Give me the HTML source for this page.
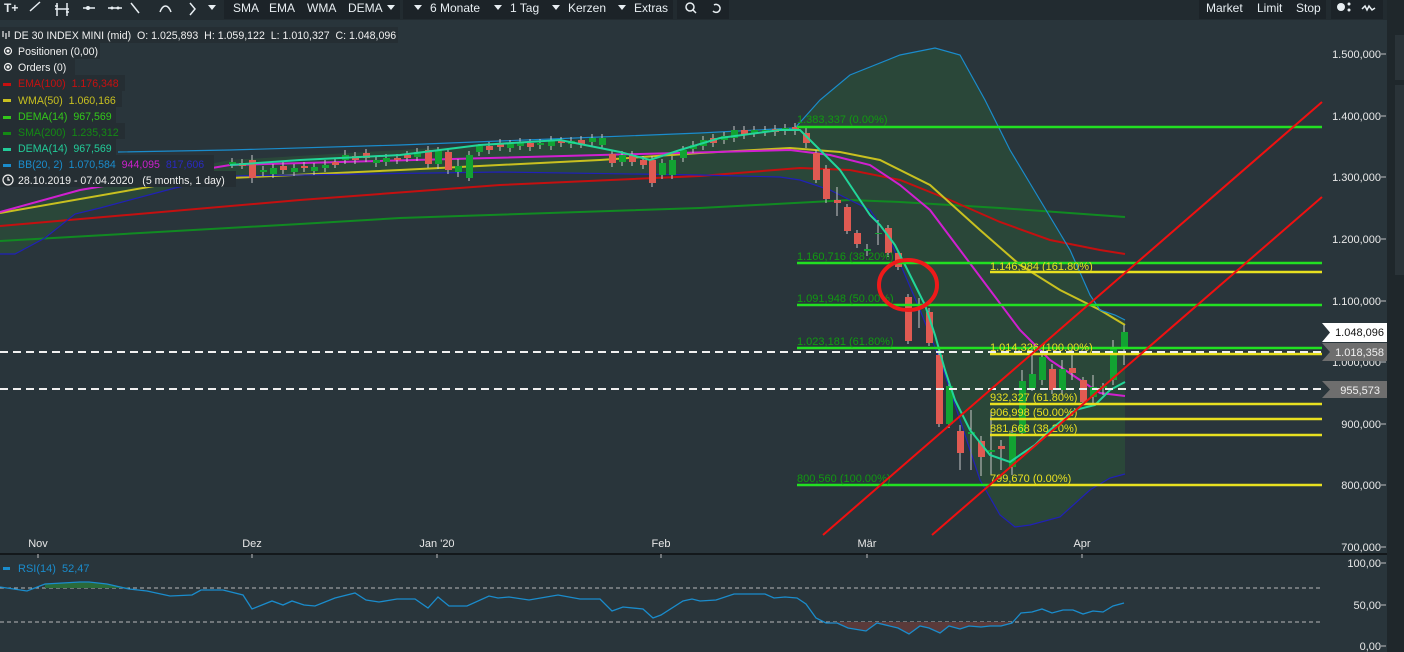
<!DOCTYPE html>
<html><head><meta charset="utf-8"><style>
html,body{margin:0;padding:0;background:#29353b;width:1404px;height:652px;overflow:hidden;font-family:"Liberation Sans",sans-serif;}
svg{position:absolute;left:0;top:0}
.pre{white-space:pre}
</style></head><body>
<svg width="1404" height="652" viewBox="0 0 1404 652" font-family="Liberation Sans, sans-serif" font-size="11">
<rect width="1404" height="652" fill="#29353b"/>
<!-- toolbar -->
<rect x="0" y="0" width="1404" height="20" fill="#222b30"/>
<rect x="224" y="0" width="176" height="19" fill="#1c2328"/>
<rect x="403" y="0" width="270" height="19" fill="#1c2328"/>
<rect x="677" y="0" width="52" height="19" fill="#1c2328"/>
<rect x="1199" y="0" width="127" height="19" fill="#1c2328"/>
<rect x="1331" y="0" width="52" height="19" fill="#1c2328"/>
<rect x="1387" y="0" width="17" height="652" fill="#1f272b"/>
<rect x="1395" y="35" width="9" height="45" fill="#2a3338"/>
<rect x="1395" y="85" width="9" height="190" fill="#2a3338"/>
<g fill="#e8eef2" font-size="12">
<text x="4" y="12" font-weight="bold">T+</text>
<text x="233" y="12">SMA</text><text x="269" y="12">EMA</text><text x="307" y="12">WMA</text><text x="348" y="12">DEMA</text>
<text x="430" y="12">6 Monate</text><text x="510" y="12">1 Tag</text><text x="568" y="12">Kerzen</text><text x="634" y="12">Extras</text>
<text x="1206" y="12">Market</text><text x="1257" y="12">Limit</text><text x="1296" y="12">Stop</text>
</g>
<g stroke="#e8eef2" stroke-width="1.5" fill="none">
<path d="M30 11 L40 2"/><path d="M57 3v13M67 3v13M55 9h14M55 6h3M66 12h3"/><path d="M83 8h12"/><path d="M108 8h14"/>
<path d="M131 3l8 10"/><path d="M160 12c3-8 8-8 11 0"/><path d="M190 3l5 6-5 6"/>
<circle cx="690" cy="7" r="4"/><path d="M693 10l3 3"/><path d="M714 5a4 4 0 1 1-1 6"/>
<path d="M1362 9l3-3 2 4 2-4 3 4 3-2"/>
</g>
<g fill="#e8eef2"><path d="M208 5h8l-4 5z"/><path d="M387 5h8l-4 5z"/><path d="M414 5h8l-4 5z"/><path d="M494 5h8l-4 5z"/><path d="M552 5h8l-4 5z"/><path d="M618 5h8l-4 5z"/><circle cx="1341" cy="7" r="4"/><circle cx="1349" cy="4" r="1.5"/><circle cx="1349" cy="10" r="1.5"/><circle cx="88" cy="8" r="2"/><circle cx="112" cy="8" r="1.5"/><circle cx="118" cy="8" r="1.5"/></g>

<!-- BB fill -->
<path d="M0 212 L80 190 L230 160 L400 150 L600 138 L700 133 L795 128 L820 100 L850 75 L900 55 L935 48 L960 55 L985 100 L1010 150 L1040 200 L1070 250 L1090 295 L1100 310 L1115 315 L1125 320 L1125 474 L1110 478 L1090 490 L1060 517 L1030 525 L1015 527 L1000 515 L980 480 L960 420 L940 360 L920 310 L905 275 L890 240 L870 210 L830 190 L800 180 L780 177 L700 175 L500 172 L300 175 L230 176 L175 188 L100 208 L75 214 L45 238 L15 254 L0 254Z" fill="#2a4a3a" opacity="0.85"/>
<polyline fill="none" stroke="#118a22" stroke-width="2" points="0,241 300,224 400,218 700,208 850,200 900,202 1000,208 1125,217"/>
<polyline fill="none" stroke="#c41010" stroke-width="2" points="0,226 300,200 500,185 700,176 800,168 850,170 900,180 950,200 1000,222 1050,240 1100,250 1125,254"/>
<polyline fill="none" stroke="#c8c020" stroke-width="2" points="0,213 160,185 230,178 400,170 600,160 700,153 790,148 840,152 880,160 930,185 980,230 1020,265 1060,290 1100,310 1125,325"/>
<polyline fill="none" stroke="#d020d0" stroke-width="2" points="0,212 80,190 230,165 600,155 790,150 830,155 870,165 900,185 930,210 960,250 990,290 1020,330 1050,360 1080,380 1100,393 1125,396"/>
<polyline fill="none" stroke="#1a8ccc" stroke-width="1.2" points="118,152 230,150 400,145 600,137 700,133 795,128 820,100 850,75 900,55 935,48 960,55 985,100 1010,150 1040,200 1070,250 1090,295 1100,310 1115,315 1125,320"/>
<polyline fill="none" stroke="#2020b8" stroke-width="1.2" points="0,254 15,254 45,238 75,214 100,208 175,188 230,176 300,175 500,172 700,175 780,177 800,180 830,190 870,210 890,240 905,275 920,310 940,360 960,420 980,480 1000,515 1015,527 1030,525 1060,517 1090,490 1110,478 1125,474"/>

<!-- candles -->
<g stroke="#c8c8c8" stroke-width="1">
<path d="M232 158v10M242 159v10M252 155v28M263 166v10M273 164v14M283 162v12M294 164v12M304 162v10M314 163v12M325 160v12M335 158v10M345 150v14M355 152v12M366 149v13M376 156v11M386 154v12M397 154v10M407 151v11M417 148v13M428 146v22M438 147v22M448 148v26M458 159v18M469 151v30M479 144v12M489 142v12M500 139v12M510 140v12M520 138v12M530 139v12M540 139v10M551 136v14M561 137v10M571 137v11M581 136v12M592 134v12M602 134v15M612 150v17M622 151v15M632 151v15M643 156v13M652 156v31M662 159v20M672 156v23M683 146v16M693 141v12M703 136v14M713 134v13M724 132v12M734 126v16M744 126v13M754 126v11M765 126v10M775 125v11M785 124v11M795 123v12M806 128v20M816 150v33M826 165v38M837 187v29M847 204v30M857 230v18M867 244v12M878 220v25M888 225v32M898 250v20M908 294v50M919 298v30M929 308v38M939 352v75M949 383v45M960 425v45M971 410v60M981 436v40M991 410v65M1001 440v30M1012 430v45M1022 370v65M1032 346v45M1042 350v35M1052 364v30M1062 360v35M1072 350v30M1083 377v28M1093 375v30M1103 383v12M1113 340v45M1124 325v40"/>
</g>
<g fill="#e05a52">
<rect x="239" y="163" width="7" height="3"/><rect x="249" y="160" width="7" height="18"/><rect x="280" y="166" width="7" height="4"/><rect x="301" y="166" width="7" height="2"/><rect x="332" y="162" width="7" height="3"/><rect x="352" y="156" width="7" height="4"/><rect x="363" y="153" width="7" height="5"/><rect x="394" y="158" width="7" height="2"/><rect x="404" y="155" width="7" height="3"/><rect x="425" y="150" width="7" height="14"/><rect x="445" y="152" width="7" height="18"/><rect x="486" y="146" width="7" height="4"/><rect x="497" y="143" width="7" height="4"/><rect x="527" y="143" width="7" height="4"/><rect x="558" y="141" width="7" height="2"/><rect x="578" y="140" width="7" height="4"/><rect x="609" y="154" width="7" height="9"/><rect x="629" y="155" width="7" height="7"/><rect x="640" y="160" width="7" height="5"/><rect x="649" y="160" width="7" height="23"/><rect x="710" y="138" width="7" height="5"/><rect x="741" y="130" width="7" height="5"/><rect x="772" y="129" width="7" height="3"/><rect x="792" y="127" width="7" height="4"/>
<rect x="803" y="133" width="7" height="10"/><rect x="813" y="153" width="7" height="27"/><rect x="823" y="169" width="7" height="30"/><rect x="834" y="200" width="7" height="3"/><rect x="844" y="207" width="7" height="24"/><rect x="854" y="233" width="7" height="11"/><rect x="885" y="228" width="7" height="25"/><rect x="895" y="253" width="7" height="14"/><rect x="905" y="297" width="7" height="44"/><rect x="926" y="312" width="7" height="31"/><rect x="936" y="355" width="7" height="69"/><rect x="957" y="431" width="7" height="22"/><rect x="978" y="441" width="7" height="16"/><rect x="998" y="446" width="7" height="3"/><rect x="1049" y="369" width="7" height="21"/><rect x="1069" y="368" width="7" height="5"/><rect x="1080" y="380" width="7" height="22"/>
</g>
<g fill="#12a332">
<rect x="229" y="162" width="7" height="3"/><rect x="260" y="170" width="7" height="2"/><rect x="270" y="168" width="7" height="6"/><rect x="291" y="168" width="7" height="4"/><rect x="311" y="167" width="7" height="4"/><rect x="322" y="165" width="7" height="3"/><rect x="342" y="155" width="7" height="5"/><rect x="373" y="160" width="7" height="3"/><rect x="383" y="158" width="7" height="4"/><rect x="414" y="152" width="7" height="5"/><rect x="435" y="151" width="7" height="13"/><rect x="455" y="166" width="7" height="6"/><rect x="466" y="155" width="7" height="23"/><rect x="476" y="146" width="7" height="6"/><rect x="507" y="144" width="7" height="4"/><rect x="517" y="142" width="7" height="4"/><rect x="537" y="143" width="7" height="2"/><rect x="548" y="140" width="7" height="6"/><rect x="568" y="141" width="7" height="3"/><rect x="589" y="138" width="7" height="4"/><rect x="599" y="138" width="7" height="7"/><rect x="619" y="155" width="7" height="7"/><rect x="659" y="163" width="7" height="12"/><rect x="669" y="160" width="7" height="15"/><rect x="680" y="150" width="7" height="8"/><rect x="690" y="145" width="7" height="4"/><rect x="700" y="140" width="7" height="6"/><rect x="721" y="136" width="7" height="4"/><rect x="731" y="130" width="7" height="8"/><rect x="751" y="130" width="7" height="3"/><rect x="762" y="130" width="7" height="2"/><rect x="782" y="128" width="7" height="3"/>
<rect x="864" y="249" width="7" height="2"/><rect x="875" y="233" width="7" height="1"/><rect x="916" y="307" width="7" height="2"/><rect x="946" y="386" width="7" height="38"/><rect x="968" y="432" width="7" height="2"/><rect x="988" y="450" width="7" height="2"/><rect x="1009" y="433" width="7" height="34"/><rect x="1019" y="381" width="7" height="52"/><rect x="1029" y="374" width="7" height="14"/><rect x="1039" y="357" width="7" height="23"/><rect x="1059" y="369" width="7" height="21"/><rect x="1090" y="387" width="7" height="10"/><rect x="1100" y="386" width="7" height="2"/><rect x="1110" y="348" width="7" height="32"/><rect x="1121" y="332" width="7" height="15"/>
</g>
<polyline fill="none" stroke="#22d69a" stroke-width="2" points="230,165 300,160 400,155 480,145 560,140 620,152 650,160 680,150 720,138 780,130 800,130 820,150 840,170 860,200 870,215 880,225 895,245 905,265 915,285 925,305 935,335 945,370 955,400 970,430 990,455 1010,462 1020,455 1035,445 1050,430 1075,410 1095,405 1110,390 1125,382"/>

<g stroke="#22e022" stroke-width="2.5">
<path d="M797 127H1322M797 263H1322M797 305H1322M797 348H1322M797 485H990"/>
</g>
<g stroke="#e8e020" stroke-width="2.5">
<path d="M990 272H1322M990 354H1322M990 404H1322M990 419H1322M990 435H1322M990 485H1322"/>
</g>
<g fill="#119a11" font-size="11">
<text x="797" y="123">1.383,337 (0.00%)</text><text x="797" y="260">1.160,716 (38.20%)</text><text x="797" y="302">1.091,948 (50.00%)</text><text x="797" y="345">1.023,181 (61.80%)</text><text x="797" y="482">800,560 (100.00%)</text>
</g>
<g fill="#e8e020" font-size="11">
<text x="990" y="270">1.146,984 (161.80%)</text><text x="990" y="351">1.014,326 (100.00%)</text><text x="990" y="401">932,327 (61.80%)</text><text x="990" y="416">906,998 (50.00%)</text><text x="990" y="432">881,668 (38.20%)</text><text x="990" y="482">799,670 (0.00%)</text>
</g>
<g stroke="#f0f0f0" stroke-width="2" stroke-dasharray="8,5">
<path d="M0 352H1322M0 389H1322"/>
</g>
<g stroke="#f01010" stroke-width="2">
<path d="M823 535L1322 102M932 535L1322 197"/>
</g>
<ellipse cx="908" cy="285" rx="29" ry="25" fill="none" stroke="#ee1a1a" stroke-width="4"/>

<g fill="#e8e8e8" font-size="11" text-anchor="end">
<text x="1381" y="58">1.500,000</text><text x="1381" y="120">1.400,000</text><text x="1381" y="181">1.300,000</text><text x="1381" y="243">1.200,000</text><text x="1381" y="305">1.100,000</text><text x="1381" y="366">1.000,000</text><text x="1381" y="428">900,000</text><text x="1381" y="489">800,000</text><text x="1381" y="551">700,000</text>
</g>
<path d="M1322 323H1387V342H1322L1330 332.5Z" fill="#ffffff"/>
<path d="M1322 343H1387V361H1322L1330 352Z" fill="#6e6e6e"/>
<path d="M1322 381H1387V398H1322L1330 389.5Z" fill="#6e6e6e"/>
<g font-size="11" text-anchor="end"><text x="1384" y="336" fill="#111">1.048,096</text><text x="1384" y="356" fill="#f0f0f0">1.018,358</text><text x="1380" y="394" fill="#f0f0f0">955,573</text></g>

<!-- legend -->
<rect x="0" y="27" width="398" height="16" fill="#252e33"/>
<rect x="0" y="43" width="100" height="16" fill="#252e33"/>
<rect x="0" y="59" width="75" height="16" fill="#252e33"/>
<rect x="0" y="75" width="125" height="16" fill="#252e33"/>
<rect x="0" y="91" width="122" height="16" fill="#252e33"/>
<rect x="0" y="107" width="116" height="16" fill="#252e33"/>
<rect x="0" y="123" width="125" height="16" fill="#252e33"/>
<rect x="0" y="139" width="116" height="16" fill="#252e33"/>
<rect x="0" y="155" width="214" height="16" fill="#252e33"/>
<rect x="0" y="171" width="236" height="16" fill="#252e33"/>
<g font-size="10.6" class="pre">
<text x="14" y="39" fill="#f0f0f0" class="pre">DE 30 INDEX MINI (mid)  O: 1.025,893  H: 1.059,122  L: 1.010,327  C: 1.048,096</text>
<text x="18" y="55" fill="#f0f0f0">Positionen (0,00)</text>
<text x="18" y="71" fill="#f0f0f0">Orders (0)</text>
<text x="18" y="87" fill="#c81010" class="pre">EMA(100)  1.176,348</text>
<text x="18" y="104" fill="#c8c020" class="pre">WMA(50)  1.060,166</text>
<text x="18" y="120" fill="#33c81a" class="pre">DEMA(14)  967,569</text>
<text x="18" y="136" fill="#148a14" class="pre">SMA(200)  1.235,312</text>
<text x="18" y="152" fill="#22cc99" class="pre">DEMA(14)  967,569</text>
<text x="18" y="168" fill="#1a8ccc" class="pre">BB(20, 2)  1.070,584  <tspan fill="#cc20cc">944,095</tspan>  <tspan fill="#2a2ac0">817,606</tspan></text>
<text x="18" y="184" fill="#f0f0f0" class="pre">28.10.2019 - 07.04.2020   (5 months, 1 day)</text>
</g>
<g stroke="#f0f0f0" fill="none" stroke-width="1.2">
<circle cx="8" cy="51" r="3.5"/><circle cx="8" cy="67" r="3.5"/><circle cx="8" cy="180" r="5"/><path d="M8 177v3h2"/>
<path d="M3 31v6M6 33v6M9 31v6"/>
</g>
<g fill="#f0f0f0"><circle cx="8" cy="51" r="1.5"/><circle cx="8" cy="67" r="1.5"/></g>
<rect x="3" y="83" width="8" height="3" fill="#c81010"/><rect x="3" y="99" width="8" height="3" fill="#c8c020"/><rect x="3" y="116" width="8" height="3" fill="#33c81a"/><rect x="3" y="132" width="8" height="3" fill="#148a14"/><rect x="3" y="148" width="8" height="3" fill="#22cc99"/><rect x="3" y="164" width="8" height="3" fill="#1a8ccc"/>

<path d="M0 554H1387" stroke="#0c0f11" stroke-width="1.5"/>
<g stroke="#c0c0c0"><path d="M38 554v4M252 554v4M437 554v4M661 554v4M867 554v4M1082 554v4M1381 54h5M1381 116h5M1381 177h5M1381 239h5M1381 301h5M1381 362h5M1381 424h5M1381 485h5M1381 547h5M1381 563h5M1381 605h5M1381 646h5"/></g>
<g fill="#e8e8e8" font-size="11" text-anchor="middle">
<text x="38" y="547">Nov</text><text x="252" y="547">Dez</text><text x="437" y="547">Jan '20</text><text x="661" y="547">Feb</text><text x="867" y="547">Mär</text><text x="1082" y="547">Apr</text>
</g>
<g stroke="#b8b8b8" stroke-width="1" stroke-dasharray="4,3"><path d="M0 588H1322M0 622H1322"/></g>
<path d="M45 588 L45,584 80,582 89,582 107,584 129,588Z" fill="#2a6a3a"/>
<path d="M826 622 L837,623 848,628 866,631 877,623 898,628 909,634 920,626 929,628 940,633 949,626 960,629 969,626 981,627 990,626 1001,626 1012,622Z" fill="#5a3a3a"/>
<polyline fill="none" stroke="#1a8ccc" stroke-width="1.3" points="0,587 27,591 45,584 80,582 89,582 107,584 129,589 147,591 170,596 192,595 201,590 223,590 243,595 252,609 272,601 283,605 292,601 304,605 315,606 335,598 355,593 366,600 379,602 397,599 415,599 428,608 438,597 449,606 467,606 489,596 498,598 509,597 529,600 558,595 580,599 600,599 612,611 623,607 643,609 653,618 661,615 683,601 692,599 700,601 716,600 734,594 765,594 774,598 785,597 797,598 806,604 816,618 826,623 837,623 848,628 866,631 877,623 898,628 909,634 920,626 929,628 940,633 949,626 960,629 969,626 981,627 990,626 1001,626 1012,623 1021,613 1032,612 1042,609 1052,613 1063,610 1073,610 1083,614 1093,611 1103,612 1113,606 1124,603"/>
<rect x="3" y="567" width="7" height="3" fill="#1a8ccc"/>
<text x="18" y="572" fill="#1a8ccc" font-size="11" class="pre">RSI(14)  52,47</text>
<g fill="#e8e8e8" font-size="11" text-anchor="end"><text x="1381" y="567">100,00</text><text x="1381" y="609">50,00</text><text x="1381" y="650">0,00</text></g>
</svg>
</body></html>
